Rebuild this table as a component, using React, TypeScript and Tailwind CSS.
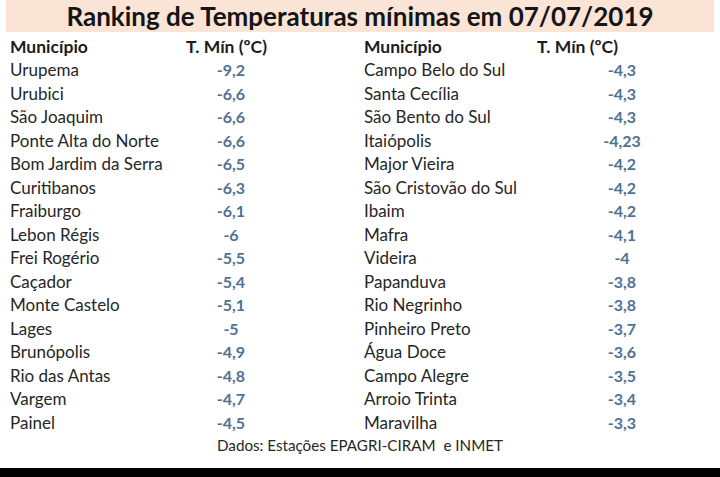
const left: Array<[string, string]> = [
  ["Urupema", "-9,2"],
  ["Urubici", "-6,6"],
  ["São Joaquim", "-6,6"],
  ["Ponte Alta do Norte", "-6,6"],
  ["Bom Jardim da Serra", "-6,5"],
  ["Curitibanos", "-6,3"],
  ["Fraiburgo", "-6,1"],
  ["Lebon Régis", "-6"],
  ["Frei Rogério", "-5,5"],
  ["Caçador", "-5,4"],
  ["Monte Castelo", "-5,1"],
  ["Lages", "-5"],
  ["Brunópolis", "-4,9"],
  ["Rio das Antas", "-4,8"],
  ["Vargem", "-4,7"],
  ["Painel", "-4,5"],
];

const right: Array<[string, string]> = [
  ["Campo Belo do Sul", "-4,3"],
  ["Santa Cecília", "-4,3"],
  ["São Bento do Sul", "-4,3"],
  ["Itaiópolis", "-4,23"],
  ["Major Vieira", "-4,2"],
  ["São Cristovão do Sul", "-4,2"],
  ["Ibaim", "-4,2"],
  ["Mafra", "-4,1"],
  ["Videira", "-4"],
  ["Papanduva", "-3,8"],
  ["Rio Negrinho", "-3,8"],
  ["Pinheiro Preto", "-3,7"],
  ["Água Doce", "-3,6"],
  ["Campo Alegre", "-3,5"],
  ["Arroio Trinta", "-3,4"],
  ["Maravilha", "-3,3"],
];

export default function App() {
  return (
    <div className="w-[720px] h-[477px] bg-white flex flex-col font-['Lato',sans-serif] text-[#262626]">
      <div className="mx-[6px] h-[32px] bg-[#f9e4d6] flex items-center justify-center">
        <h1 className="text-[26px] font-bold text-[#151515] leading-none">
          Ranking de Temperaturas mínimas em 07/07/2019
        </h1>
      </div>
      <div className="flex flex-col pt-[2.5px] text-[17px] leading-[23.5px]">
        <div className="flex pl-[10px] font-bold text-[17.5px] text-[#1c1c1c]">
          <div className="w-[176px]">Município</div>
          <div className="w-[90px]">T. Mín (ºC)</div>
          <div className="w-[88px]" />
          <div className="w-[173px]">Município</div>
          <div className="w-[170px]">T. Mín (ºC)</div>
        </div>
        {left.map(([name, value], i) => (
          <div key={name} className="flex pl-[10px]">
            <div className="w-[176px]">{name}</div>
            <div className="w-[90px] text-center font-bold text-[16px] text-[#4f7294]">{value}</div>
            <div className="w-[88px]" />
            <div className="w-[173px]">{right[i][0]}</div>
            <div className="w-[170px] text-center font-bold text-[16px] text-[#4f7294]">{right[i][1]}</div>
          </div>
        ))}
        <div className="pl-[217px] text-[15.2px]">Dados: Estações EPAGRI-CIRAM&nbsp; e INMET</div>
      </div>
      <div className="mt-auto h-[9px] bg-black" />
    </div>
  );
}
